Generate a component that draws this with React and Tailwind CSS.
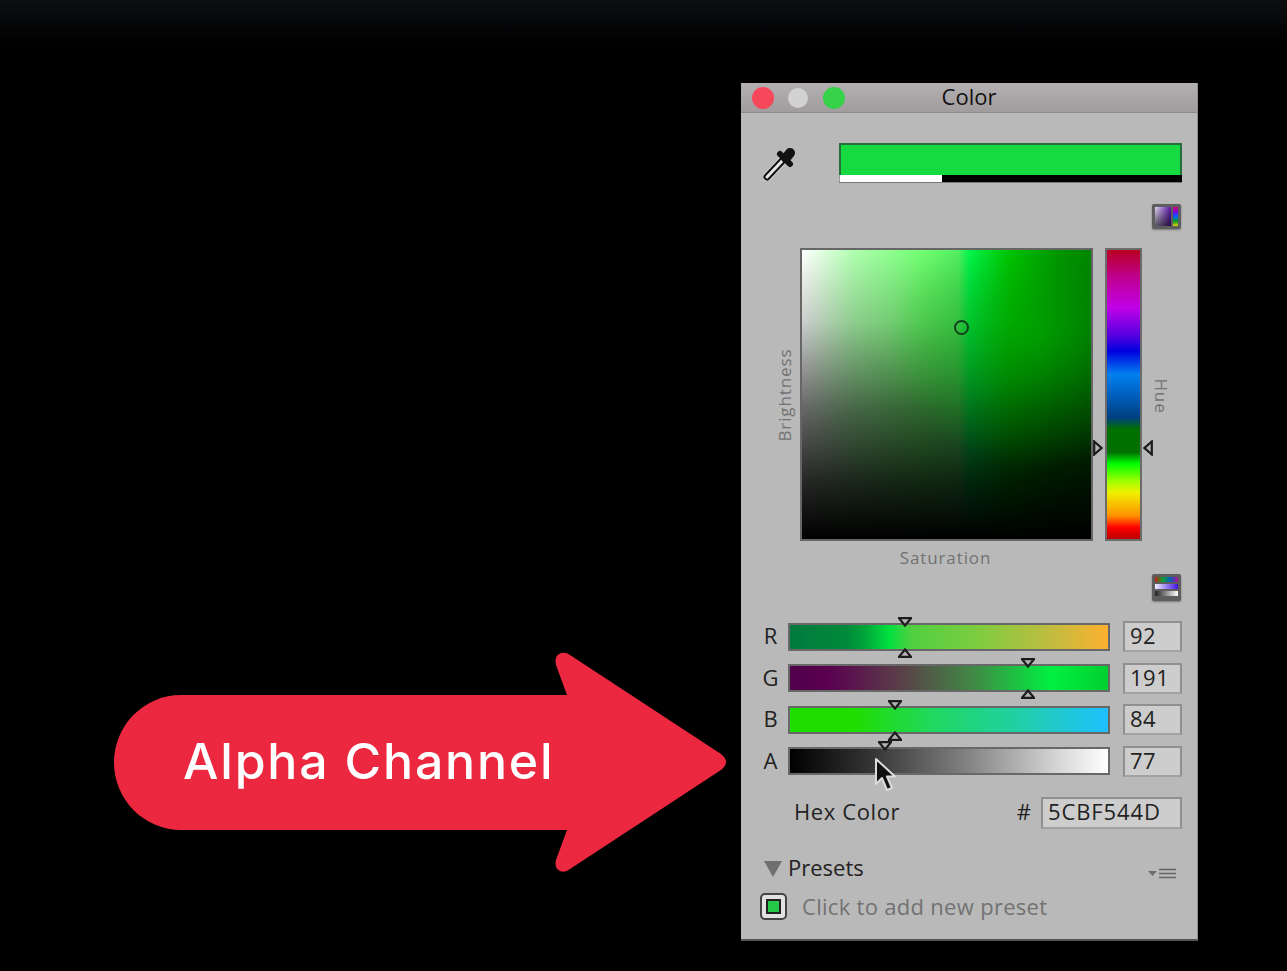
import React from "react";

const font = { fontFamily: '"Open Sans", "Noto Sans", sans-serif' };

function Down({ x, className = "" }) {
  return (
    <svg className={`absolute ${className}`} style={{ left: x - 8 }} width="14" height="10" viewBox="0 0 14 10">
      <path d="M1 1.2H13L7 8.5Z" fill="#b4b4b4" stroke="#1c1c1c" strokeWidth="2.2" />
    </svg>
  );
}
function Up({ x, className = "" }) {
  return (
    <svg className={`absolute ${className}`} style={{ left: x - 8 }} width="14" height="10" viewBox="0 0 14 10">
      <path d="M1 8.8H13L7 1.5Z" fill="#b4b4b4" stroke="#1c1c1c" strokeWidth="2.2" />
    </svg>
  );
}

function Slider({ label, value, gradient, thumb, bottom = true, children }) {
  return (
    <div className="flex h-[31px] items-center">
      <div className="w-[47px] pb-[3px] pl-[12px] text-center text-[22px] leading-none text-[#222]">{label}</div>
      <div className={`relative h-[28px] w-[322px] border-2 border-[#686868] ${gradient}`}>
        <Down x={thumb} className="top-[-8px]" />
        {bottom && <Up x={thumb} className="bottom-[-9px]" />}
        {children}
      </div>
      <div className="ml-[13px] flex h-[31px] w-[59px] items-center border-2 border-[#8f8f8f] border-b-[#a2a2a2] bg-[#cdcdcd] pb-[3px] pl-[5px] text-[22px] leading-none tracking-[0.5px] text-[#222]">
        {value}
      </div>
    </div>
  );
}

export default function App() {
  return (
    <div
      style={font}
      className="flex h-[971px] w-[1287px] overflow-hidden bg-[linear-gradient(to_bottom,#0c0e11,#000_45px)] pl-[114px] pt-[83px]"
    >
      {/* Arrow */}
      <div className="relative mt-[569px] flex h-[222px] w-[612px] items-center pb-[4px] pl-[69px]">
        <svg className="absolute left-0 top-0" width="612" height="222" viewBox="0 0 612 222">
          <path
            d="M67 43H453L442 13Q440 4 446 1.5Q451 -0.5 456 3L607 102Q617 110 607 118L456 217Q451 221 446 219Q440 216 442 208L453 178H67A67 67.5 0 0 1 67 43Z"
            fill="#ec2840"
          />
        </svg>
        <span className="relative font-['Inter'] text-[50px] font-medium leading-none tracking-[1.8px] text-white">Alpha Channel</span>
      </div>

      {/* Color window */}
      <div className="relative ml-[15px] flex h-[858px] w-[457px] flex-col border-b-2 border-r border-b-[#555] border-r-[#8e8e8e] bg-[#b9b9b9]">
        <div className="grid h-[30px] shrink-0 grid-cols-[1fr_auto_1fr] items-center border-b border-[#8d8a8b] bg-[linear-gradient(to_bottom,#b4afb1,#a19d9f)]">
          <div className="flex items-center pl-[11px]">
            <div className="h-[22px] w-[22px] rounded-full bg-[#f7475a]" />
            <div className="ml-[14px] h-[20px] w-[20px] rounded-full bg-[#d2d2d2]" />
            <div className="ml-[15px] h-[22px] w-[22px] rounded-full bg-[#35d24a]" />
          </div>
          <div className="pb-[3px] text-[22px] leading-none text-[#111]">Color</div>
          <div />
        </div>

        {/* Swatch row */}
        <div className="mt-[30px] flex h-[40px] shrink-0">
          <div className="w-[98px] pl-[22px] pt-[2px]">
            <svg width="34" height="36" viewBox="0 0 34 36">
              <path d="M4 32L20 15" stroke="#d8d8d8" strokeWidth="9" strokeLinecap="round" />
              <path d="M4 32L20 15" stroke="#111" strokeWidth="7" strokeLinecap="round" />
              <path d="M4 32L20 15" stroke="#e8e8e8" strokeWidth="3" strokeLinecap="round" />
              <path d="M17 9L27 19" stroke="#111" strokeWidth="6" strokeLinecap="round" />
              <path d="M23 13L27 8" stroke="#111" strokeWidth="10" strokeLinecap="round" />
            </svg>
          </div>
          <div className="flex w-[343px] flex-col border-2 border-b-0 border-[#24703a]">
            <div className="h-[30px] bg-[#17da42]" />
            <div className="-mx-[2px] flex h-[8px] border-b border-[#777] bg-black">
              <div className="w-[103px] border-l border-[#999] bg-white" />
            </div>
          </div>
        </div>

        {/* Mode icon 1 */}
        <div className="mt-[21px] flex h-[25px] shrink-0 justify-end pr-[16px]">
          <div className="flex h-[25px] w-[29px] rounded-[2px] bg-[#5e5e5e] p-[3px] shadow-[0_1px_2px_#777]">
            <div className="h-full w-[16px] bg-[linear-gradient(to_bottom,rgba(0,0,0,0),rgba(0,0,0,0.6)),linear-gradient(to_right,#e0d8f0,#5a14a8)]" />
            <div className="ml-[2px] h-full w-[5px] bg-[linear-gradient(to_bottom,#d0006a,#8000e0,#0060ff,#00a020,#f0d000)]" />
          </div>
        </div>

        {/* Picker */}
        <div className="mt-[19px] flex h-[293px] shrink-0">
          <div className="flex w-[59px] items-center justify-end pr-[7px]">
            <div className="relative h-[18px] w-[18px]">
              <span className="absolute left-1/2 top-1/2 -translate-x-1/2 -translate-y-1/2 -rotate-90 text-[17px] leading-none tracking-[0.9px] text-[#727272]">Brightness</span>
            </div>
          </div>
          <div className="relative h-[293px] w-[293px] border-2 border-[#666] bg-[radial-gradient(ellipse_150px_130px_at_82%_30%,rgba(0,180,0,0.6),rgba(0,170,0,0)),linear-gradient(to_bottom,rgba(0,0,0,0)_0%,rgba(0,0,0,0.2)_25%,rgba(0,0,0,0.6)_55%,rgba(0,0,0,0.85)_80%,#000_100%),linear-gradient(to_right,#ffffff_0%,#b0ffb0_18%,#70ff70_42%,#5cf56c_54%,#00ff55_58%,#00c800_72%,#009000_88%,#007c00_100%)]">
            <div className="absolute left-[152px] top-[70px] h-[15px] w-[15px] rounded-full border-2 border-[#123f1c]" />
            <svg className="absolute right-[-12px] top-[190px]" width="10" height="16" viewBox="0 0 10 16">
              <path d="M1.2 1.5V14.5L8.5 8Z" fill="#b4b4b4" stroke="#1c1c1c" strokeWidth="2.2" />
            </svg>
          </div>
          <div className="relative ml-[12px] h-[293px] w-[37px] border-2 border-[#6b6b6b] bg-[linear-gradient(to_bottom,#b80020_0%,#c0008a_9%,#c000e8_20%,#5000e0_30%,#0000e0_35%,#0080f0_43%,#0060c0_50%,#004080_58%,#007000_62%,#007000_70%,#00ff00_74%,#a0ff00_80%,#f0f000_84%,#ff9000_92%,#ff0000_96%,#b80000_100%)]">
            <svg className="absolute right-[-13px] top-[190px]" width="10" height="16" viewBox="0 0 10 16">
              <path d="M8.8 1.5V14.5L1.5 8Z" fill="#b4b4b4" stroke="#1c1c1c" strokeWidth="2.2" />
            </svg>
          </div>
          <div className="flex w-[37px] items-center justify-center pt-[3px]">
            <div className="relative h-[18px] w-[18px]">
              <span className="absolute left-1/2 top-1/2 -translate-x-1/2 -translate-y-1/2 rotate-90 text-[17px] leading-none tracking-[0.9px] text-[#727272]">Hue</span>
            </div>
          </div>
        </div>

        {/* Saturation */}
        <div className="ml-[58px] mt-[7px] h-[20px] w-[293px] shrink-0 text-center text-[17px] leading-[20px] tracking-[0.9px] text-[#727272]">
          Saturation
        </div>

        {/* Mode icon 2 */}
        <div className="mt-[6px] flex h-[27px] shrink-0 justify-end pr-[16px]">
          <div className="flex h-[27px] w-[29px] flex-col gap-[2px] rounded-[2px] bg-[#5e5e5e] p-[3px] shadow-[0_1px_2px_#777]">
            <div className="h-[5px] bg-[linear-gradient(to_right,#c02010,#10a030,#0060c0,#b01090)]" />
            <div className="h-[5px] bg-[linear-gradient(to_right,#f0f0ff,#4010e0)]" />
            <div className="h-[5px] bg-[linear-gradient(to_right,#222,#fff)]" />
          </div>
        </div>

        {/* Sliders */}
        <div className="mt-[20px] flex shrink-0 flex-col gap-[10.67px]">
          <Slider label="R" value="92" thumb={116} gradient="bg-[linear-gradient(to_right,#007a3e_0%,#008a3a_18%,#00a83a_24%,#00e040_31%,#4fd040_38%,#80cc40_60%,#c0bc40_82%,#ffb030_100%)]" />
          <Slider label="G" value="191" thumb={239} gradient="bg-[linear-gradient(to_right,#50004a_0%,#5a0050_12%,#5a4048_35%,#408a45_58%,#00f040_82%,#00d030_100%)]" />
          <Slider label="B" value="84" thumb={106} gradient="bg-[linear-gradient(to_right,#20dd00_0%,#20dd00_20%,#20d860_45%,#20d0a0_70%,#20c0ff_100%)]" />
          <Slider label="A" value="77" thumb={96} bottom={false} gradient="bg-[linear-gradient(to_right,#000_0%,#333_25%,#808080_55%,#d8d8d8_85%,#fff_100%)]">
            <svg className="absolute left-[83px] top-[8px]" width="24" height="38" viewBox="0 0 24 38">
              <path d="M3 2V27L9 21L14 33L19 31L14 19.5H22Z" fill="#111" stroke="#dcdcdc" strokeWidth="2" strokeLinejoin="round" />
            </svg>
          </Slider>
        </div>

        {/* Hex */}
        <div className="mt-[20px] flex h-[32px] shrink-0 items-center">
          <div className="ml-[53px] pb-[3px] text-[22px] leading-none tracking-[0.6px] text-[#222]">Hex Color</div>
          <div className="ml-auto mr-[10px] pb-[3px] text-[22px] leading-none text-[#222]">#</div>
          <div className="mr-[15px] flex h-[32px] w-[141px] items-center border-2 border-[#8f8f8f] border-b-[#a2a2a2] bg-[#cdcdcd] pb-[3px] pl-[5px] text-[22px] leading-none tracking-[0.9px] text-[#222]">
            5CBF544D
          </div>
        </div>

        {/* Presets */}
        <div className="mt-[29px] flex h-[22px] shrink-0 items-center">
          <svg className="ml-[23px]" width="18" height="16" viewBox="0 0 18 16">
            <path d="M0 0H18L9 16Z" fill="#6f6f6f" />
          </svg>
          <div className="ml-[6px] pb-[4px] text-[22px] leading-none text-[#222]">Presets</div>
          <svg className="ml-auto mr-[20px] mt-[10px]" width="29" height="11" viewBox="0 0 29 11">
            <path d="M0 3H9L4.5 8Z" fill="#6f6f6f" />
            <path d="M11 1.5H28M11 5.5H28M11 9.5H28" stroke="#666" strokeWidth="1.6" />
          </svg>
        </div>

        {/* Add preset */}
        <div className="mt-[13px] flex h-[27px] shrink-0 items-center">
          <div className="ml-[19px] flex h-[27px] w-[27px] items-center justify-center rounded-[5px] border-2 border-[#444] bg-[#e2e2e2]">
            <div className="h-[15px] w-[15px] border-2 border-[#222] bg-[#24c94a]" />
          </div>
          <div className="ml-[15px] pb-[1px] text-[22px] leading-none tracking-[0.3px] text-[#727272]">Click to add new preset</div>
        </div>
      </div>
    </div>
  );
}
